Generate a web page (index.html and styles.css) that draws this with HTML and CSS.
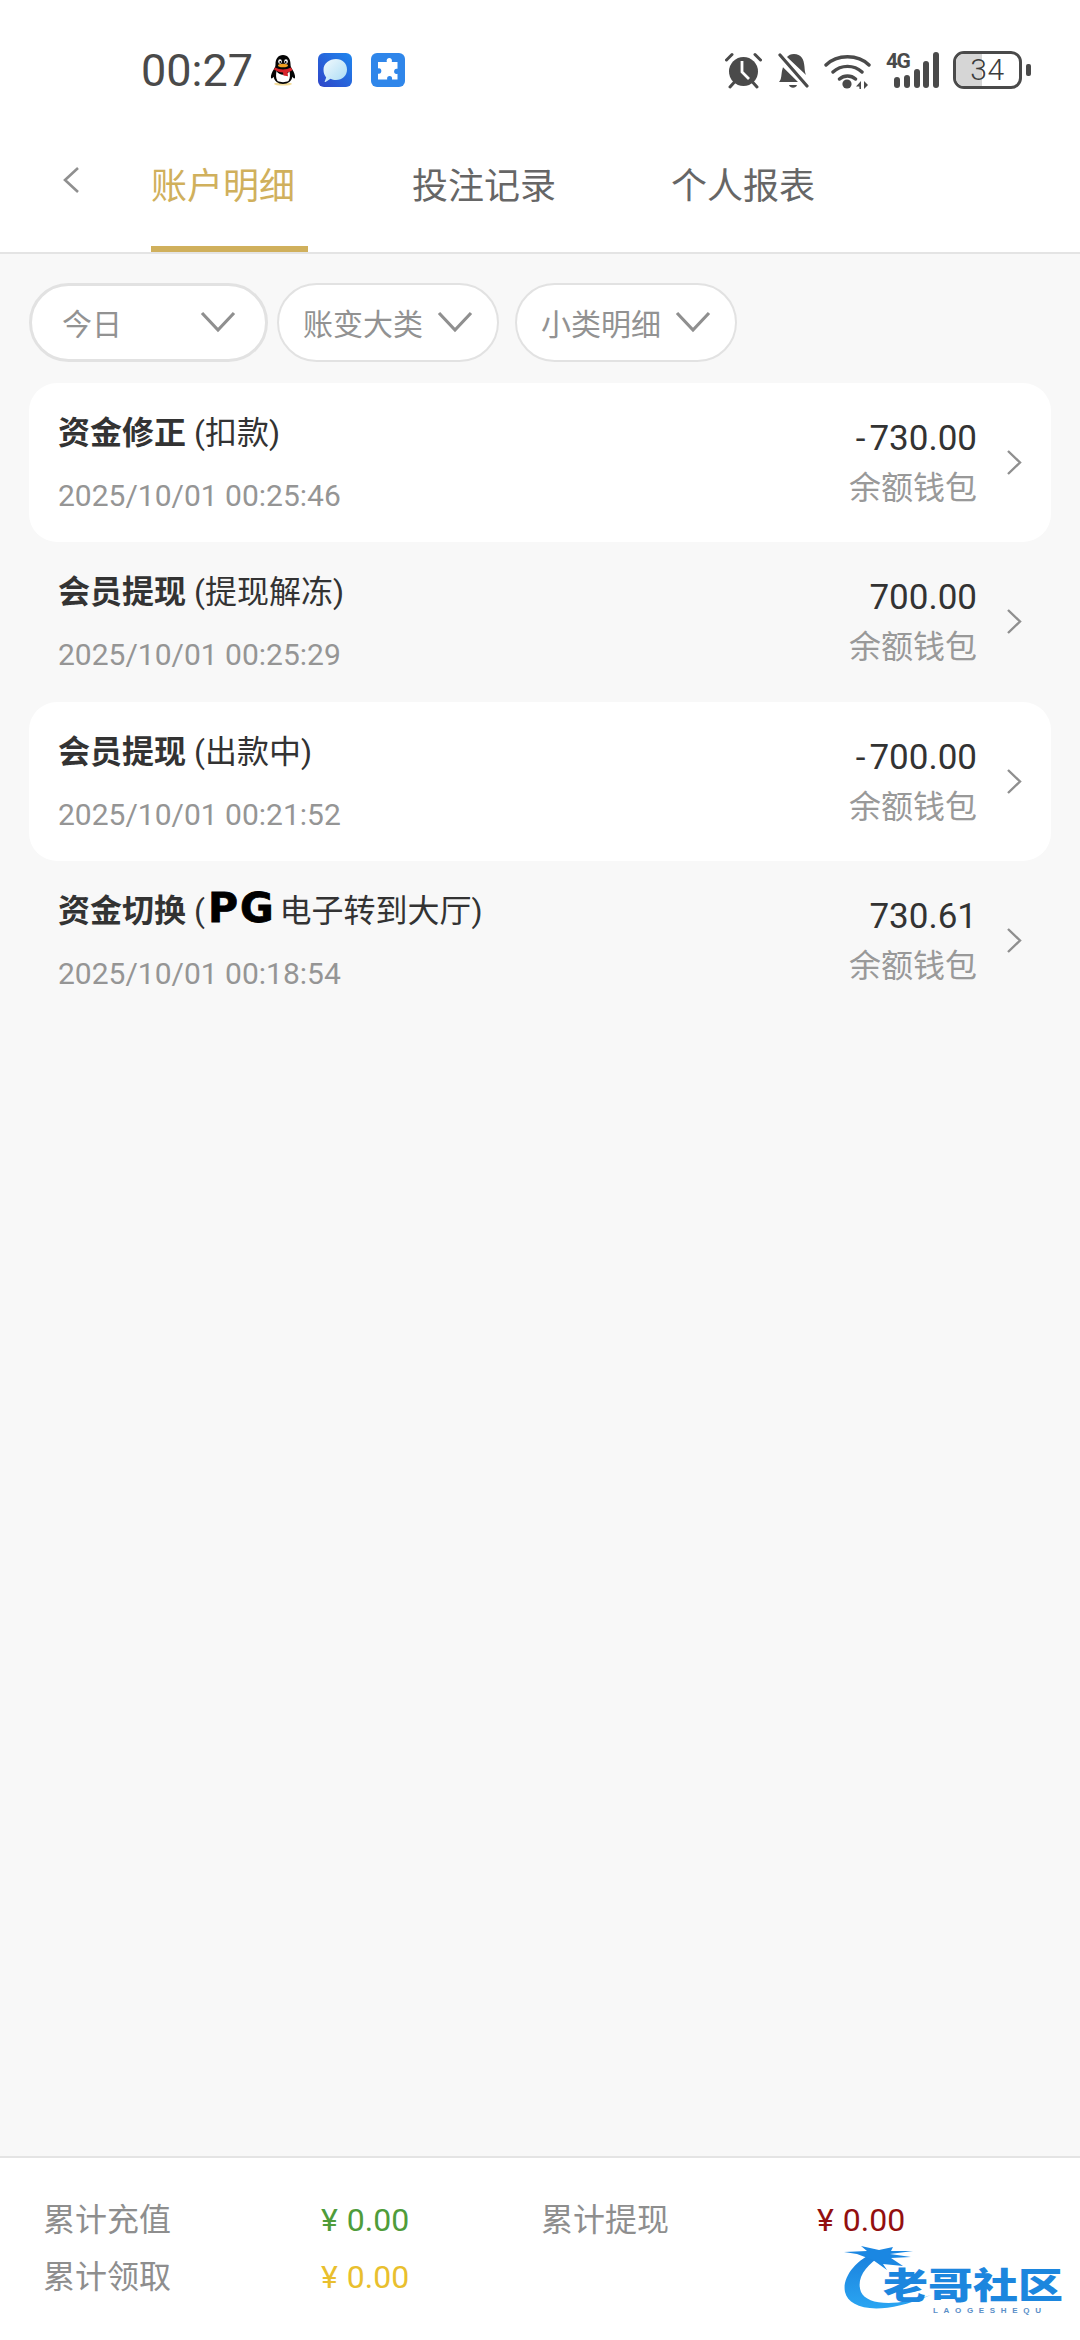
FILE: index.html
```html
<!DOCTYPE html>
<html lang="zh-CN">
<head>
<meta charset="utf-8">
<title>账户明细</title>
<link rel="stylesheet" href="styles.css">
</head>
<body>
<div class="page">
  <header class="top">
    <div class="status">
      <span class="clock">00:27</span>
      <svg class="ic-qq" viewBox="0 0 26 32"><ellipse cx="13" cy="30" rx="9" ry="1.6" fill="#f3dc9a"/><path d="M13 1c-5 0-7.500 4-7.500 9 0 2-.5 3.500-1.500 5-2 3-3.500 6.500-3 9 .6 1 1.800 0 2.500-1.200C4.500 27 8 30 13 30s8.500-3 9.500-7.200c.7 1.200 1.900 2.200 2.500 1.200.5-2.500-1-6-3-9-1-1.500-1.500-3-1.500-5 0-5-2.500-9-7.500-9z" fill="#050505"/><path d="M6.500 17c3 5 10 5 13 0 .5 3 1 7-1 10-3 1.500-8 1.500-11 0-2-3-1.500-7-1-10z" fill="#fff"/><path d="M5 13.500c5 2.500 11 2.500 16 0l1.500 2.500c-2 1.500-3.500 2-5 2.300l.5 4-4.500-.8-.5-3c-3-.1-6-1-9-3z" fill="#d8232a"/><ellipse cx="13" cy="11.500" rx="5" ry="1.800" fill="#f0a020"/><ellipse cx="10" cy="7.500" rx="1.800" ry="2.300" fill="#fff"/><ellipse cx="16" cy="7.500" rx="1.800" ry="2.300" fill="#fff"/><circle cx="10.300" cy="8" r=".9" fill="#000"/><circle cx="15.700" cy="8" r=".9" fill="#000"/></svg>
      <svg class="ic-msg" viewBox="0 0 34 34"><defs><linearGradient id="mg" x1="0" y1="1" x2="1" y2="0"><stop offset="0" stop-color="#2f45c8"/><stop offset="1" stop-color="#1f86ee"/></linearGradient><linearGradient id="mb" x1="0" y1="0" x2="1" y2="1"><stop offset="0" stop-color="#f2f9fd"/><stop offset="1" stop-color="#a9dcf5"/></linearGradient></defs><rect width="34" height="34" rx="6" fill="url(#mg)"/><path d="M18 6c6.500 0 11 4.500 11 10.500S24.500 27 18 27c-2 0-4-.4-5.500-1.200L7.500 29c-.6.300-1 0-.8-.6l1.500-4C6.500 22.500 5.500 20 5.500 16.500 5.500 10.500 11.500 6 18 6z" fill="url(#mb)"/></svg>
      <svg class="ic-puzzle" viewBox="0 0 34 34"><rect width="34" height="34" rx="6" fill="#2f86ea"/><path d="M13 9h2.800c-1.500-5.500 6.500-5.500 5 0h5.700v6.800c-4.500-1.400-4.500 6.400 0 5v5.700h-5.500c1.200-4.600-6-4.600-4.800 0H7v-5.800c4.500 1.300 4.500-6.500 0-5.200V9z" fill="#fff"/></svg>
      <div class="status-right">
        <svg class="ic-alarm" viewBox="0 0 37 37"><circle cx="18.500" cy="19.500" r="14.500" fill="#4a4a4a"/><path d="M17 9v11l7 7" fill="none" stroke="#fff" stroke-width="2.800"/><path d="M1.500 8 7 2.500M35.500 8 30 2.500M5 35l4.500-5M32 35l-4.500-5" stroke="#4a4a4a" stroke-width="3" stroke-linecap="round" fill="none"/></svg>
        <svg class="ic-bell" viewBox="0 0 32 37"><path d="M1 30c3-3 2-8 3.500-13 0-.6.300-1.200.5-1.800L20 30H1zM9 5c2-2 3.500-3 7-3 7 0 10 5 10.500 13 .2 3 .3 5 1.500 8z" fill="#4a4a4a"/><path d="M2 3l27 31" stroke="#4a4a4a" stroke-width="3.200" stroke-linecap="round"/><path d="M11 33h8c-1 3.500-7 3.500-8 0z" fill="#4a4a4a"/></svg>
        <svg class="ic-wifi" viewBox="0 0 47 37"><path d="M2 13C13 2 34 2 45 13M9 20c8-7.500 21-7.500 29 0M15.500 27c4.500-4 11.500-4 16 0" fill="none" stroke="#4a4a4a" stroke-width="3.400" stroke-linecap="round"/><circle cx="23" cy="32" r="4.600" fill="#4a4a4a"/><path d="M37 29v8h-1.500l-.2-2.500H32zM40 29v8l4-4z" fill="#4a4a4a"/></svg>
        <div class="ic-signal">
          <span class="net">4G</span>
          <svg class="bars" viewBox="0 0 53 36"><g fill="#4a4a4a"><rect x="8" y="25" width="6" height="11" rx="3"/><rect x="18" y="23" width="6" height="13" rx="3"/><rect x="28" y="17" width="6" height="19" rx="3"/><rect x="37" y="9" width="6" height="27" rx="3"/><rect x="47" y="0" width="6" height="36" rx="3"/></g></svg>
        </div>
        <div class="battery"><span class="level"></span><span class="pct">34</span></div>
        <span class="nub"></span>
      </div>
    </div>
    <nav class="tabs">
      <svg class="back" viewBox="0 0 18 28"><path d="M16 2 3 14l13 12" fill="none" stroke="#8f8f8f" stroke-width="2.600"/></svg>
      <a class="tab active">账户明细</a>
      <a class="tab">投注记录</a>
      <a class="tab">个人报表</a>
    </nav>
  </header>

  <main class="main">
    <div class="filters">
      <div class="pill pill-date"><span>今日</span><svg class="caret" viewBox="0 0 36 24"><path d="M2 3l16 17L34 3" fill="none" stroke="#8f8f8f" stroke-width="3.200"/></svg></div>
      <div class="pill"><span>账变大类</span><svg class="caret" viewBox="0 0 36 24"><path d="M2 3l16 17L34 3" fill="none" stroke="#8f8f8f" stroke-width="3.200"/></svg></div>
      <div class="pill pill-small"><span>小类明细</span><svg class="caret" viewBox="0 0 36 24"><path d="M2 3l16 17L34 3" fill="none" stroke="#8f8f8f" stroke-width="3.200"/></svg></div>
    </div>
    <ul class="list">
      <li class="row card">
        <div class="info"><div class="title"><b>资金修正</b> (扣款)</div><div class="time">2025/10/01 00:25:46</div></div>
        <div class="money"><div class="amount"><span class="minus">-</span>730.00</div><div class="wallet">余额钱包</div></div>
        <svg class="more" viewBox="0 0 17 27"><path d="M2 2l12 11.500L2 25" fill="none" stroke="#8f8f8f" stroke-width="2.400"/></svg>
      </li>
      <li class="row">
        <div class="info"><div class="title"><b>会员提现</b> (提现解冻)</div><div class="time">2025/10/01 00:25:29</div></div>
        <div class="money"><div class="amount">700.00</div><div class="wallet">余额钱包</div></div>
        <svg class="more" viewBox="0 0 17 27"><path d="M2 2l12 11.500L2 25" fill="none" stroke="#8f8f8f" stroke-width="2.400"/></svg>
      </li>
      <li class="row card">
        <div class="info"><div class="title"><b>会员提现</b> (出款中)</div><div class="time">2025/10/01 00:21:52</div></div>
        <div class="money"><div class="amount"><span class="minus">-</span>700.00</div><div class="wallet">余额钱包</div></div>
        <svg class="more" viewBox="0 0 17 27"><path d="M2 2l12 11.500L2 25" fill="none" stroke="#8f8f8f" stroke-width="2.400"/></svg>
      </li>
      <li class="row">
        <div class="info"><div class="title"><b>资金切换</b> (<span class="pg">PG</span>电子转到大厅)</div><div class="time">2025/10/01 00:18:54</div></div>
        <div class="money"><div class="amount">730.61</div><div class="wallet">余额钱包</div></div>
        <svg class="more" viewBox="0 0 17 27"><path d="M2 2l12 11.500L2 25" fill="none" stroke="#8f8f8f" stroke-width="2.400"/></svg>
      </li>
    </ul>
  </main>

  <footer class="summary">
    <span class="label">累计充值</span><span class="value green">¥<i>0.00</i></span>
    <span class="label">累计提现</span><span class="value red">¥<i>0.00</i></span>
    <span class="label">累计领取</span><span class="value yellow">¥<i>0.00</i></span>
  </footer>

  <svg class="watermark" viewBox="0 0 220 70">
    <defs><linearGradient id="wg" x1="0" y1="0" x2="0" y2="1"><stop offset="0" stop-color="#1a7fdc"/><stop offset="1" stop-color="#2aa5f2"/></linearGradient></defs>
    <path d="M33 6C12 14-1 32 2 46c4 17 34 25 86 3-36 12-64 10-70-3C13 33 22 19 40 9z" fill="url(#wg)"/>
    <path d="M1 6 24 5 18 0 36 4 50 1 48 5 70 5 47 8 68 11 48 12 60 20 40 18 44 24 30 14 14 8z" fill="#1b87e2"/>
    <text class="wm-cn" x="40" y="53" textLength="180" lengthAdjust="spacingAndGlyphs">老哥社区</text>
    <text class="wm-en" x="90" y="67" textLength="108">LAOGESHEQU</text>
  </svg>
</div>
</body>
</html>
```

FILE: styles.css
```css
* { box-sizing: border-box; }
html, body { margin: 0; padding: 0; }
body {
  width: 1080px;
  height: 2340px;
  font-family: Roboto, "Noto Sans CJK SC", sans-serif;
  background: #f8f8f8;
  overflow: hidden;
}
.page {
  position: relative;
  width: 1080px;
  height: 2340px;
  display: flex;
  flex-direction: column;
}

/* top */
.top { background: #fff; border-bottom: 2px solid #e4e4e4; }
.status {
  height: 140px;
  display: flex;
  align-items: center;
  padding-left: 141px;
  color: #4a4a4a;
}
.clock { font-size: 45px; width: 129px; }
.ic-qq { width: 26px; height: 32px; }
.ic-msg { width: 34px; height: 34px; margin-left: 22px; }
.ic-puzzle { width: 34px; height: 34px; margin-left: 19px; }
.status-right { display: flex; align-items: center; margin-left: auto; margin-right: 49px; }
.ic-alarm { width: 37px; height: 37px; }
.ic-bell { width: 32px; height: 37px; margin-left: 16px; }
.ic-wifi { width: 47px; height: 37px; margin-left: 14px; }
.ic-signal { position: relative; width: 53px; height: 36px; margin-left: 15px; }
.bars { display: block; width: 53px; height: 36px; }
.net { position: absolute; left: 0; top: -2px; font: 700 21px/22px Roboto, sans-serif; letter-spacing: -1.5px; color: #4a4a4a; }
.battery {
  position: relative;
  width: 69px;
  height: 38px;
  margin-left: 14px;
  border: 3px solid #4a4a4a;
  border-radius: 11px;
  overflow: hidden;
  display: flex;
  align-items: center;
  justify-content: center;
}
.level { position: absolute; left: 0; top: 0; bottom: 0; width: 42%; background: #d6d6d6; }
.pct { position: relative; font-size: 30px; font-weight: 300; line-height: 1; color: #3c3c3c; letter-spacing: .5px; }
.nub { width: 5px; height: 12px; margin-left: 4px; border-radius: 2px; background: #4a4a4a; }

.tabs { height: 112px; display: flex; padding-left: 62px; position: relative; }
.back { width: 18px; height: 28px; margin-top: 26px; }
.tab {
  display: block;
  height: 112px;
  padding-top: 24px;
  font-size: 36px;
  line-height: 46px;
  color: #666;
}
.tab:nth-of-type(1) { margin-left: 71px; width: 157px; border-bottom: 6px solid #d0b05c; color: #d0b05c; }
.tab:nth-of-type(2) { margin-left: 104px; }
.tab:nth-of-type(3) { margin-left: 115px; }

/* main */
.main { flex: 1; padding: 29px 29px 0; }
.filters { display: flex; gap: 9px; }
.pill {
  height: 79px;
  width: 222px;
  display: flex;
  align-items: center;
  justify-content: space-between;
  padding: 0 24px 2px 24px;
  background: #fff;
  border: 2px solid #e2e2e2;
  border-radius: 40px;
  color: #929292;
  font-size: 30px;
}
.pill-date { width: 239px; padding: 0 29px 2px 30px; border-width: 3px; }
.pill-small { margin-left: 7px; }
.caret { width: 36px; height: 24px; }

.list { list-style: none; margin: 21px 0 0; padding: 0; }
.row {
  height: 159.3px;
  display: flex;
  align-items: flex-start;
  padding: 0 28px 0 29px;
  border-radius: 28px;
}
.card { background: #fff; }
.info { flex: 1; padding-top: 30px; }
.title { font-size: 32px; line-height: 40px; color: #333; white-space: nowrap; }
.title b { font-weight: 700; }
.time { margin-top: 23px; font-size: 30px; line-height: 40px; color: #959595; }
.money { padding-top: 34px; text-align: right; }
.amount { font-size: 35px; line-height: 44px; color: #333; }
.minus { margin-right: 4px; }
.wallet { margin-top: 7px; font-size: 32px; line-height: 40px; color: #999; }
.more { width: 17px; height: 27px; margin: 66px 0 0 29px; }
.pg {
  font: 700 41px/0 "DejaVu Sans", sans-serif;
  color: #000;
  letter-spacing: 2px;
  -webkit-text-stroke: .8px #000;
  margin: 0 4px 0 3px;
}

/* footer */
.summary {
  height: 184px;
  display: grid;
  grid-template-columns: 278px 220px 276px 1fr;
  grid-auto-rows: 57px;
  align-content: start;
  padding: 34px 0 0 43px;
  background: #fff;
  border-top: 2px solid #e4e4e4;
}
.label { font-size: 32px; line-height: 57px; color: #8e8e8e; }
.value { font-size: 32px; line-height: 57px; }
.value i { font-style: normal; margin-left: 9px; }
.green { color: #4f9c3a; }
.red { color: #930f0f; }
.yellow { color: #e9bf2e; }

.watermark { position: absolute; left: 843px; top: 2246px; width: 220px; height: 70px; }
.wm-cn { font: 900 36px "Noto Sans CJK SC", sans-serif; fill: #1c86de; }
.wm-en { font: 700 8px "Liberation Sans", sans-serif; fill: #5a8fc8; }
```
